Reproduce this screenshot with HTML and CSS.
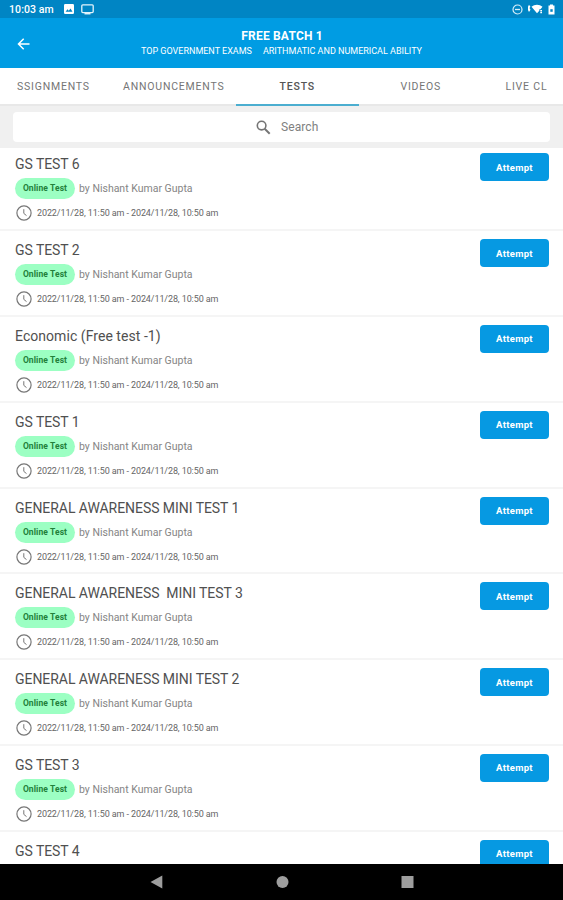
FILE: index.html
```html
<!DOCTYPE html>
<html lang="en">
<head>
    <meta charset="UTF-8">
    <meta name="viewport" content="width=device-width, initial-scale=1.0">
    <title>Free Batch 1 - Tests</title>
    <link rel="stylesheet" href="styles.css">
</head>
<body>
    <svg class="sprite" width="0" height="0">
        <symbol id="clock" viewBox="0 0 16 16">
            <circle cx="8" cy="8" r="7.1" fill="none" stroke="currentColor" stroke-width="1.2"/>
            <path d="M7.8 4.2v4.2l2.7 2.2" fill="none" stroke="currentColor" stroke-width="1"/>
        </symbol>
    </svg>

    <div class="status-bar">
        <span class="time">10:03 am</span>
        <svg class="picture" width="10" height="10" viewBox="0 0 10 10">
            <rect width="10" height="10" rx="1.2" fill="#fff"/>
            <path d="M1.6 7.8l1.9-2.5 1.3 1.5 1.7-2.2 2 3.2z" fill="#0085c4"/>
        </svg>
        <svg class="screen" width="13" height="11" viewBox="0 0 13 11">
            <rect x="0.8" y="0.8" width="11.4" height="7.8" rx="1" fill="none" stroke="#e3f3fb" stroke-width="1.3"/>
            <path d="M3.5 9.7h6" stroke="#e3f3fb" stroke-width="1.5"/>
        </svg>
        <div class="status-right">
            <svg width="11" height="11" viewBox="0 0 11 11" fill="none" stroke="#d9effa">
                <circle cx="5.5" cy="5.5" r="4.5" stroke-width="1.2"/>
                <path d="M3 5.5h5" stroke-width="1.3"/>
            </svg>
            <svg class="wifi" width="17" height="10" viewBox="0 0 17 10" fill="#fff">
                <path d="M2 0.8l1.4 2L2.500 4l1 1.800L2 8 1 6V2.800z"/>
                <path d="M4.500 2.800C7.500 0 12.500 0 15.500 2.800L13.500 5.200h-1.200v1.600L10 9.200z"/>
                <path d="M13.300 6h1.700v1.400h-1.700zM13.300 8h1.700v1.200h-1.700z"/>
            </svg>
            <svg class="battery" width="7" height="11" viewBox="0 0 7 11">
                <path d="M2 0.5h3v1h1.500v9h-6v-9H2z" fill="#fff"/>
                <path d="M2.300 5.200h2.400v2.600H2.300z" fill="#0085c4"/>
            </svg>
        </div>
    </div>

    <header>
        <svg class="back" width="14" height="12" viewBox="0 0 14 12" fill="none" stroke="#fff" stroke-width="1.5">
            <path d="M12.500 6H1.500M6.700 0.800L1.500 6l5.200 5.200"/>
        </svg>
        <h1>FREE BATCH 1</h1>
        <p><span>TOP GOVERNMENT EXAMS</span><span>ARITHMATIC AND NUMERICAL ABILITY</span></p>
    </header>

    <nav class="tabs">
        <a class="first">SSIGNMENTS</a>
        <a>ANNOUNCEMENTS</a>
        <a class="active">TESTS</a>
        <a>VIDEOS</a>
        <a class="last">LIVE CL</a>
    </nav>

    <div class="search-area">
        <div class="search-box">
            <svg width="15" height="15" viewBox="0 0 15 15" fill="none" stroke="#757575">
                <circle cx="5.600" cy="5.600" r="4.300" stroke-width="1.6"/>
                <path d="M8.700 8.700l5 5" stroke-width="2"/>
            </svg>
            <span>Search</span>
        </div>
    </div>

    <main class="test-list">
        <article class="test">
            <div class="info">
                <h2>GS TEST 6</h2>
                <div class="author"><span class="badge">Online Test</span><span class="by">by Nishant Kumar Gupta</span></div>
                <div class="date"><svg><use href="#clock"/></svg><span>2022/11/28, 11:50 am - 2024/11/28, 10:50 am</span></div>
            </div>
            <button>Attempt</button>
        </article>
        <article class="test">
            <div class="info">
                <h2>GS TEST 2</h2>
                <div class="author"><span class="badge">Online Test</span><span class="by">by Nishant Kumar Gupta</span></div>
                <div class="date"><svg><use href="#clock"/></svg><span>2022/11/28, 11:50 am - 2024/11/28, 10:50 am</span></div>
            </div>
            <button>Attempt</button>
        </article>
        <article class="test">
            <div class="info">
                <h2 class="mixed">Economic (Free test -1)</h2>
                <div class="author"><span class="badge">Online Test</span><span class="by">by Nishant Kumar Gupta</span></div>
                <div class="date"><svg><use href="#clock"/></svg><span>2022/11/28, 11:50 am - 2024/11/28, 10:50 am</span></div>
            </div>
            <button>Attempt</button>
        </article>
        <article class="test">
            <div class="info">
                <h2>GS TEST 1</h2>
                <div class="author"><span class="badge">Online Test</span><span class="by">by Nishant Kumar Gupta</span></div>
                <div class="date"><svg><use href="#clock"/></svg><span>2022/11/28, 11:50 am - 2024/11/28, 10:50 am</span></div>
            </div>
            <button>Attempt</button>
        </article>
        <article class="test">
            <div class="info">
                <h2>GENERAL AWARENESS MINI TEST 1</h2>
                <div class="author"><span class="badge">Online Test</span><span class="by">by Nishant Kumar Gupta</span></div>
                <div class="date"><svg><use href="#clock"/></svg><span>2022/11/28, 11:50 am - 2024/11/28, 10:50 am</span></div>
            </div>
            <button>Attempt</button>
        </article>
        <article class="test">
            <div class="info">
                <h2>GENERAL AWARENESS  MINI TEST 3</h2>
                <div class="author"><span class="badge">Online Test</span><span class="by">by Nishant Kumar Gupta</span></div>
                <div class="date"><svg><use href="#clock"/></svg><span>2022/11/28, 11:50 am - 2024/11/28, 10:50 am</span></div>
            </div>
            <button>Attempt</button>
        </article>
        <article class="test">
            <div class="info">
                <h2>GENERAL AWARENESS MINI TEST 2</h2>
                <div class="author"><span class="badge">Online Test</span><span class="by">by Nishant Kumar Gupta</span></div>
                <div class="date"><svg><use href="#clock"/></svg><span>2022/11/28, 11:50 am - 2024/11/28, 10:50 am</span></div>
            </div>
            <button>Attempt</button>
        </article>
        <article class="test">
            <div class="info">
                <h2>GS TEST 3</h2>
                <div class="author"><span class="badge">Online Test</span><span class="by">by Nishant Kumar Gupta</span></div>
                <div class="date"><svg><use href="#clock"/></svg><span>2022/11/28, 11:50 am - 2024/11/28, 10:50 am</span></div>
            </div>
            <button>Attempt</button>
        </article>
        <article class="test">
            <div class="info">
                <h2>GS TEST 4</h2>
            </div>
            <button>Attempt</button>
        </article>
    </main>

    <footer class="nav-bar">
        <svg width="13" height="14" viewBox="0 0 13 14"><path d="M0.500 7L12.300 0.500v13z" fill="#9e9e9e"/></svg>
        <svg width="13" height="14" viewBox="0 0 13 14"><circle cx="6.500" cy="7" r="6" fill="#9e9e9e"/></svg>
        <svg width="13" height="14" viewBox="0 0 13 14"><rect x="0.500" y="1" width="12" height="12" fill="#9e9e9e"/></svg>
    </footer>
</body>
</html>
```

FILE: styles.css
```css
* {
    box-sizing: border-box;
}
body {
    margin: 0;
    width: 563px;
    height: 900px;
    overflow: hidden;
    display: flex;
    flex-direction: column;
    font-family: Roboto, sans-serif;
    background: #fff;
}
svg {
    display: block;
    flex: none;
}
.sprite {
    position: absolute;
}
.status-bar {
    flex: none;
    height: 18px;
    padding: 0 8px 0 9px;
    display: flex;
    align-items: center;
    background: #0085c4;
    color: #fff;
}
.time {
    width: 55px;
    font-size: 10.5px;
    font-weight: 500;
    letter-spacing: 0.1px;
    white-space: nowrap;
}
.screen {
    margin-left: 7px;
}
.status-right {
    margin-left: auto;
    display: flex;
    align-items: center;
}
.wifi {
    margin-left: 4px;
}
.battery {
    margin-left: 4px;
}
header {
    flex: none;
    position: relative;
    height: 50px;
    padding-top: 10px;
    background: #009ce3;
    color: #fff;
    text-align: center;
}
.back {
    position: absolute;
    left: 17px;
    top: 20px;
}
header h1 {
    margin: 0;
    font-size: 12px;
    line-height: 17px;
    font-weight: 700;
    letter-spacing: 0.25px;
    word-spacing: -0.3px;
    padding-left: 1px;
}
header p {
    margin: 0;
    display: flex;
    justify-content: center;
    gap: 11px;
    font-size: 9px;
    line-height: 13px;
}
.tabs {
    flex: none;
    height: 38px;
    display: grid;
    grid-template-columns: 112px 123.5px 123.5px 123.5px 1fr;
    border-bottom: 2px solid #e8e8e8;
}
.tabs a {
    height: 38px;
    line-height: 38px;
    font-size: 10.5px;
    letter-spacing: 0.8px;
    color: #757575;
    text-align: center;
    white-space: nowrap;
}
.tabs .first {
    text-align: left;
    padding-left: 17px;
}
.tabs .last {
    text-align: left;
    padding-left: 23px;
}
.tabs .active {
    color: #555;
    font-weight: 500;
    border-bottom: 2px solid #4baed0;
}
.search-area {
    flex: none;
    height: 42px;
    padding: 6px 13px;
    background: #f0f0f0;
}
.search-box {
    height: 30px;
    padding-left: 243px;
    display: flex;
    align-items: center;
    gap: 10px;
    border-radius: 4px;
    background: #fff;
    color: #808080;
    font-size: 12px;
    letter-spacing: 0.1px;
}
.test-list {
    flex: 1;
    min-height: 0;
    overflow: hidden;
}
.test {
    height: 85.8px;
    padding: 8px 14px 0 15px;
    display: flex;
    justify-content: space-between;
    align-items: flex-start;
    border-bottom: 2px solid #f5f5f5;
}
.test:first-child {
    height: 83.2px;
    padding-top: 5.4px;
}
.test h2 {
    margin: 0;
    height: 22px;
    font-size: 14px;
    line-height: 22px;
    font-weight: 400;
    letter-spacing: -0.05px;
    color: #505050;
    white-space: pre;
}
.test .mixed {
    letter-spacing: 0.05px;
}
.author {
    margin-top: 3px;
    height: 21px;
    display: flex;
    align-items: center;
}
.badge {
    width: 60px;
    height: 21px;
    line-height: 21px;
    border-radius: 11px;
    background: #9cffc3;
    color: #22803a;
    font-size: 8.5px;
    font-weight: 700;
    letter-spacing: 0.1px;
    text-align: center;
}
.by {
    margin-left: 4px;
    font-size: 10.5px;
    color: #858585;
}
.date {
    margin-top: 6px;
    display: flex;
    align-items: center;
    font-size: 9px;
    letter-spacing: -0.1px;
    color: #666;
}
.date svg {
    width: 16px;
    height: 16px;
    margin: 0 5px 0 1px;
    color: #777;
}
.test button {
    width: 69px;
    height: 28px;
    margin: 0;
    padding: 0;
    border: none;
    border-radius: 4px;
    background: #0699e2;
    color: #fff;
    font-family: inherit;
    font-size: 9.5px;
    font-weight: 700;
    letter-spacing: 0.3px;
}
.nav-bar {
    flex: none;
    height: 36.5px;
    padding: 0 149px 0 150px;
    display: flex;
    justify-content: space-between;
    align-items: center;
    background: #000;
}
```
